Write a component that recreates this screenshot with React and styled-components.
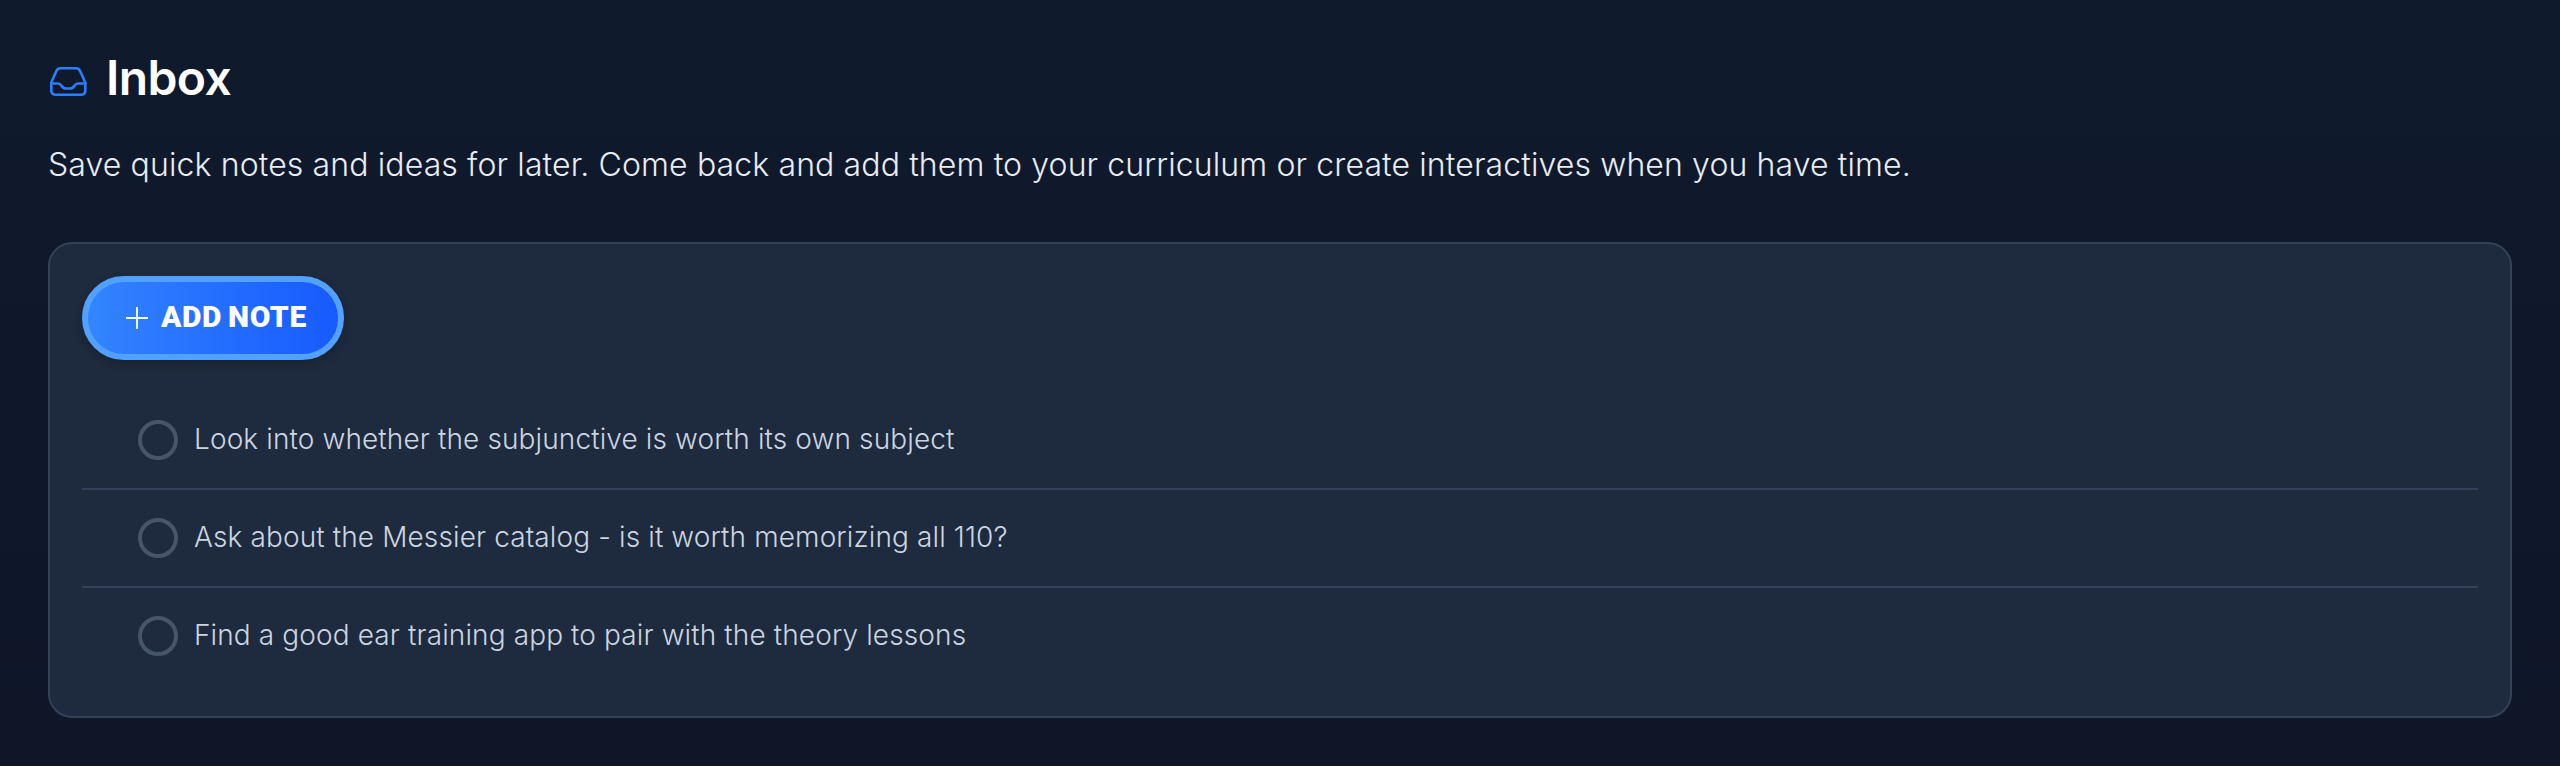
import React from "react";
import styled, { createGlobalStyle } from "styled-components";

const Global = createGlobalStyle`
  html, body { margin: 0; padding: 0; background: #0f172a; }
  #root { width: 2560px; height: 766px; overflow: hidden; }
`;

const Page = styled.main`
  box-sizing: border-box;
  height: 766px;
  padding: 48px 48px 0;
  background: linear-gradient(180deg, #101a2d, #0e1628);
  font-family: Inter, "Liberation Sans", sans-serif;
`;

const Heading = styled.header`
  display: flex;
  align-items: center;
  gap: 18px;
  height: 60px;
`;

const Title = styled.h1`
  margin: 0;
  font-size: 48px;
  line-height: 60px;
  font-weight: 600;
  letter-spacing: -0.6px;
  color: #ffffff;
`;

const Description = styled.p`
  margin: 33px 0 0;
  font-size: 32px;
  line-height: 48px;
  font-weight: 300;
  letter-spacing: 0.12px;
  color: #e8edf4;
  white-space: nowrap;
`;

const Card = styled.section`
  box-sizing: border-box;
  margin-top: 53px;
  padding: 32px;
  height: 476px;
  background: #1e2a3d;
  border: 2px solid #334259;
  border-radius: 24px;
`;

const AddButton = styled.button`
  box-sizing: border-box;
  display: flex;
  align-items: center;
  gap: 12px;
  width: 262px;
  height: 84px;
  padding: 0 0 0 37px;
  border: 6px solid #52a1ff;
  border-radius: 42px;
  background: linear-gradient(90deg, #3385ff, #175aff);
  box-shadow: 0 4px 10px rgba(0, 0, 0, 0.2);
  color: #ffffff;
  font-family: Roboto, sans-serif;
  font-size: 30px;
  font-weight: 900;
  letter-spacing: 0.6px;
  word-spacing: -2px;
  white-space: nowrap;
`;

const ButtonLabel = styled.span`
  padding-bottom: 4px;
`;

const List = styled.ul`
  list-style: none;
  margin: 32px 0 0;
  padding: 0;
`;

const Row = styled.li`
  display: flex;
  align-items: center;
  gap: 16px;
  height: 96px;
  padding-left: 56px;
  & + & { border-top: 2px solid #334259; }
`;

const Ring = styled.span`
  box-sizing: border-box;
  width: 40px;
  height: 40px;
  flex-shrink: 0;
  border: 4px solid #475569;
  border-radius: 50%;
`;

const RowText = styled.span`
  padding-bottom: 3px;
  font-size: 28px;
  line-height: 40px;
  font-weight: 300;
  letter-spacing: 0.12px;
  color: #cbd5e1;
`;

const notes = [
  "Look into whether the subjunctive is worth its own subject",
  "Ask about the Messier catalog - is it worth memorizing all 110?",
  "Find a good ear training app to pair with the theory lessons",
];

const InboxIcon = () => (
  <svg width="40" height="40" viewBox="0 0 40 40" fill="none" stroke="#2b7fff" strokeWidth="2.6" strokeLinecap="round" strokeLinejoin="round">
    <path d="M12.5 10.3h15.5a4.5 4.5 0 0 1 4 2.5L37.3 24.5V33a3.7 3.7 0 0 1-3.7 3.7H7A3.7 3.7 0 0 1 3.3 33V24.5L8.5 12.8A4.5 4.5 0 0 1 12.5 10.3Z" />
    <path d="M3.3 25.5H10c1.5 0 2.5.8 3.3 2 1 1.7 2.7 3 4.7 3h4c2 0 3.7-1.3 4.7-3 .8-1.2 1.8-2 3.3-2h7.3" />
  </svg>
);

const Plus = styled.svg`
  flex-shrink: 0;
  width: 24px;
  height: 24px;
`;

const PlusIcon = () => (
  <Plus viewBox="0 0 24 24" fill="none" stroke="#fff" strokeWidth="1.8">
    <path d="M1 12h22M12 1v22" />
  </Plus>
);

export default function App() {
  return (
    <Page>
      <Global />
      <Heading>
        <InboxIcon />
        <Title>Inbox</Title>
      </Heading>
      <Description>
        Save quick notes and ideas for later. Come back and add them to your curriculum or create interactives when you have time.
      </Description>
      <Card>
        <AddButton type="button">
          <PlusIcon />
          <ButtonLabel>ADD NOTE</ButtonLabel>
        </AddButton>
        <List>
          {notes.map((n) => (
            <Row key={n}>
              <Ring />
              <RowText>{n}</RowText>
            </Row>
          ))}
        </List>
      </Card>
    </Page>
  );
}
